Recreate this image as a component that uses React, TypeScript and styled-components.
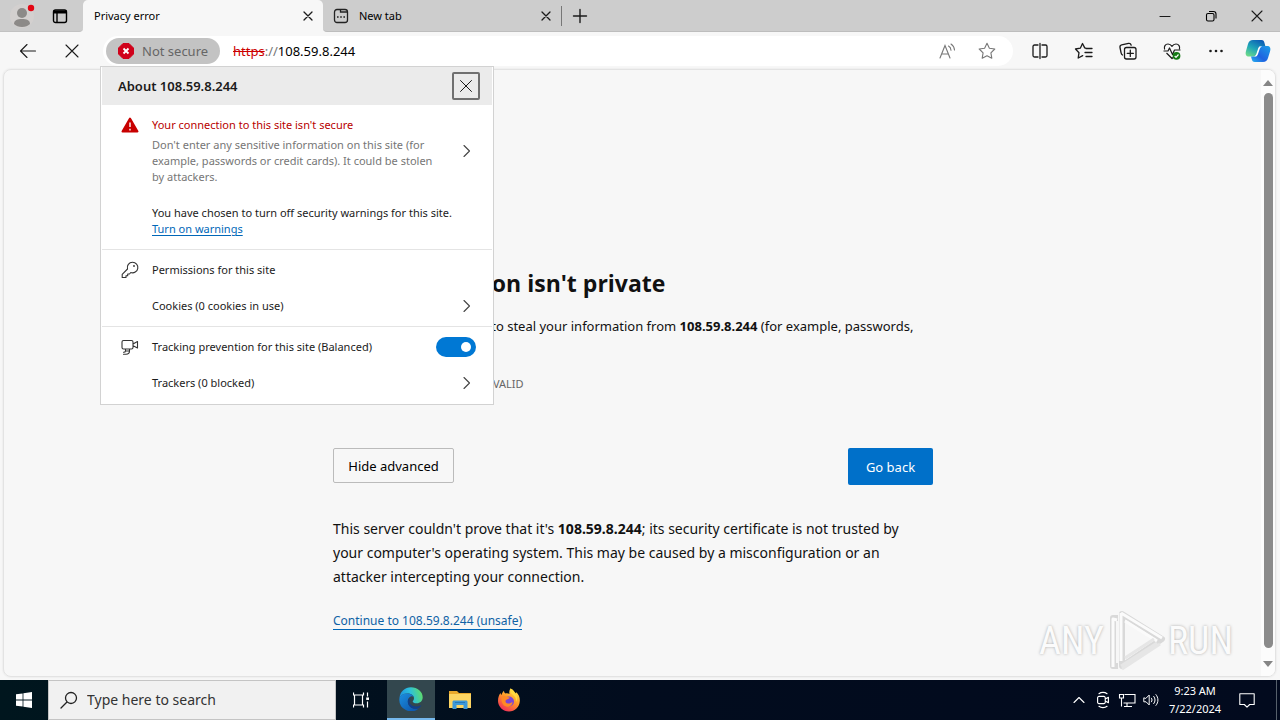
import React from "react";
import styled, { createGlobalStyle, css } from "styled-components";

const GlobalStyle = createGlobalStyle`
  *, *::before, *::after { box-sizing: border-box; }
  body { margin: 0; background: #f7f7f7; }
  body, button, input { font-family: "Noto Sans", "Open Sans", sans-serif; color: #1b1b1b; }
  button { margin: 0; padding: 0; border: 0; background: transparent; cursor: default; }
  h1, h2, p { margin: 0; }
`;

const Screen = styled.div`
  position: relative;
  display: flex;
  flex-direction: column;
  min-height: 100vh;
  overflow: hidden;
`;

/* ---------- tab strip ---------- */

const TabStrip = styled.header`
  display: flex;
  height: 32px;
  background: linear-gradient(#cdcdcd 8px, #f7f7f7 8px);
`;

const StripStart = styled.div`
  display: flex;
  width: 83px;
  background: #cdcdcd;
  border-bottom: 1px solid #c2c2c2;
  border-bottom-right-radius: 4px;
`;

const StripRest = styled.div`
  display: flex;
  flex: 1;
  background: #cdcdcd;
  border-bottom: 1px solid #bdbdbd;
  border-bottom-left-radius: 4px;
`;

const Tab = styled.div<{ $active?: boolean }>`
  display: flex;
  align-items: center;
  width: ${(p) => (p.$active ? 240 : 238)}px;
  padding: 0 3px 0 ${(p) => (p.$active ? 11 : 10)}px;
  border-radius: 5px 5px 0 0;
  background: ${(p) => (p.$active ? "#f7f7f7" : "transparent")};
`;

const TabTitle = styled.button`
  display: flex;
  align-items: center;
  gap: 10px;
  flex: 1;
  font-size: 11px;
  line-height: 16px;
  color: #000;
  text-align: left;
`;

const IconButton = styled.button<{ $w: number }>`
  display: flex;
  align-items: center;
  justify-content: center;
  flex: none;
  width: ${(p) => p.$w}px;
  align-self: stretch;
`;

const Separator = styled.i`
  width: 1px;
  height: 20px;
  align-self: center;
  background: #777;
`;

const WindowControls = styled.div`
  display: flex;
  margin-left: auto;
`;

/* ---------- toolbar ---------- */

const Toolbar = styled.nav`
  display: flex;
  align-items: stretch;
  height: 38px;
  padding: 0 2px 0 6px;
`;

const AddressBar = styled.div`
  display: flex;
  align-items: center;
  flex: 1;
  height: 30px;
  margin: 4px 5px 0 9px;
  padding: 0 6px 0 3px;
  border-radius: 15px;
  background: #fff;
`;

const SecurityBadge = styled.button`
  display: flex;
  align-items: center;
  gap: 8px;
  width: 114px;
  height: 26px;
  padding-left: 12px;
  border-radius: 13px;
  background: #c3c3c3;
  color: #666;
  font-size: 13px;
  line-height: 20px;
`;

const Url = styled.div`
  flex: 1;
  margin-left: 13px;
  font-size: 13px;
  line-height: 20px;
  color: #000;
  outline: none;
`;

const Struck = styled.s`
  color: #c00;
`;

const Muted = styled.span`
  color: #777;
`;

/* ---------- page ---------- */

const Page = styled.main`
  display: flex;
  flex: 1;
  margin: -1px 4px 3px 3px;
  border: 1px solid #e3e3e3;
  border-radius: 8px;
  box-shadow: 0 0 2px #ddd;
  overflow: hidden;
`;

const PageBody = styled.div`
  flex: 1;
  display: flex;
  justify-content: center;
  padding: 197px 0 0 1px;
`;

const Article = styled.article`
  width: 600px;
`;

const Heading = styled.h1`
  font-family: "Open Sans", "Noto Sans", sans-serif;
  font-size: 23px;
  line-height: 32px;
  font-weight: 700;
  color: #111;
`;

const Lead = styled.p`
  margin-top: 15px;
  font-size: 13px;
  line-height: 24px;
  color: #111;
`;

const ErrorCode = styled.p`
  margin-top: 14px;
  font-size: 11px;
  line-height: 16px;
  color: #666;
`;

const Actions = styled.div`
  display: flex;
  justify-content: space-between;
  align-items: flex-start;
  margin-top: 56px;
`;

const ActionButton = styled.button<{ $primary?: boolean }>`
  height: ${(p) => (p.$primary ? 37 : 35)}px;
  width: ${(p) => (p.$primary ? 85 : 121)}px;
  border-radius: 2px;
  font-size: 13px;
  line-height: 20px;
  ${(p) =>
    p.$primary
      ? css`
          background: #0070c9;
          color: #fff;
        `
      : css`
          border: 1px solid #bbb;
          color: #000;
        `}
`;

const Details = styled.p`
  margin-top: 32px;
  padding-right: 24px;
  font-size: 14px;
  line-height: 24px;
  color: #111;
`;

const Proceed = styled.a`
  display: inline-block;
  margin-top: 24px;
  border-bottom: 1px solid #0067b8;
  font-size: 12px;
  line-height: 16px;
  color: #0f62a5;
  text-decoration: none;
`;

const ScrollTrack = styled.div`
  display: flex;
  flex-direction: column;
  align-items: center;
  gap: 7px;
  width: 14px;
  padding: 10px 0 9px;
  background: #fcfcfc;
`;

const ScrollThumb = styled.div`
  flex: 1;
  width: 9px;
  margin-bottom: 6px;
  border-radius: 5px;
  background: #8b8b8b;
`;

/* ---------- site information flyout ---------- */

const Flyout = styled.section`
  position: absolute;
  top: 66px;
  left: 100px;
  width: 394px;
  padding: 0 1px 1px;
  border: 1px solid #d2d2d2;
  background: #fff;
`;

const FlyoutHeader = styled.div`
  display: flex;
  align-items: center;
  justify-content: space-between;
  height: 38px;
  padding: 0 12px 0 16px;
  background: #ebebeb;
`;

const FlyoutTitle = styled.h2`
  font-size: 13px;
  line-height: 20px;
  font-weight: 600;
`;

const FlyoutClose = styled.button`
  display: flex;
  align-items: center;
  justify-content: center;
  width: 28px;
  height: 28px;
  border: 2px solid #707070;
  border-radius: 2px;
`;

const Group = styled.div<{ $tall?: boolean }>`
  padding: ${(p) => (p.$tall ? "12px 0" : "2px 0")};
  border-bottom: 1px solid #e4e4e4;
  &:last-child {
    border-bottom: 0;
  }
`;

const Row = styled.div<{ $top?: boolean }>`
  display: flex;
  align-items: ${(p) => (p.$top ? "flex-start" : "center")};
  min-height: 36px;
  padding: 0 16px 0 18px;
  font-size: 11px;
  line-height: 16px;
`;

const RowIcon = styled.span`
  display: flex;
  flex: none;
  justify-content: center;
  width: 20px;
  margin-right: 12px;
`;

const RowText = styled.div`
  flex: 1;
  padding-right: 16px;
`;

const RowArrow = styled.button`
  display: flex;
  align-items: center;
  justify-content: center;
  align-self: stretch;
  width: 20px;
`;

const Alert = styled.p`
  margin-bottom: 4px;
  color: #b80000;
`;

const Advice = styled.p`
  color: #767676;
`;

const Notice = styled.div`
  padding: 20px 0 0 50px;
  font-size: 11px;
  line-height: 16px;
`;

const WarningsLink = styled.a`
  color: #0067b8;
  text-underline-offset: 2px;
`;

const Toggle = styled.input`
  appearance: none;
  display: flex;
  align-items: center;
  justify-content: flex-end;
  width: 40px;
  height: 20px;
  margin: 0;
  padding: 5px;
  border-radius: 10px;
  background: #0078d4;
  &::before {
    content: "";
    width: 10px;
    height: 10px;
    border-radius: 50%;
    background: #fff;
  }
`;

/* ---------- watermark ---------- */

const Watermark = styled.div`
  position: absolute;
  right: 47px;
  bottom: 47px;
  display: flex;
  align-items: center;
  gap: 2px;
  font-family: "Roboto Condensed", "Liberation Sans Narrow", "Liberation Sans", sans-serif;
  font-size: 38px;
  line-height: 64px;
  color: #fbfbfb;
  text-shadow: 0 0 3px #aaa;
`;

/* ---------- taskbar ---------- */

const Taskbar = styled.footer`
  display: flex;
  height: 40px;
  background: linear-gradient(90deg, #00161e, #020c1e 50%, #020a1e);
`;

const TaskButton = styled.button<{ $active?: boolean }>`
  display: flex;
  align-items: center;
  justify-content: center;
  width: 48px;
  margin-right: 1px;
  background: ${(p) => (p.$active ? "#33474e" : "transparent")};
  border-bottom: ${(p) => (p.$active ? "2px solid #76b9ed" : "0")};
`;

const SearchBox = styled.label`
  display: flex;
  align-items: center;
  gap: 8px;
  width: 288px;
  margin-right: 2px;
  padding-left: 10px;
  border: 1px solid #c4c4c4;
  background: #f1f1f1;
`;

const SearchInput = styled.input`
  flex: 1;
  min-width: 0;
  border: 0;
  padding: 0;
  background: transparent;
  outline: 0;
  font-size: 14px;
  line-height: 20px;
  &::placeholder {
    color: #333;
    opacity: 1;
  }
`;

const Tray = styled.div`
  display: flex;
  margin-left: auto;
  padding-right: 3px;
`;

const Clock = styled.time`
  display: flex;
  flex-direction: column;
  justify-content: center;
  width: 64px;
  font-size: 11px;
  line-height: 18px;
  text-align: center;
  color: #fff;
`;

const DesktopEdge = styled.i`
  width: 1px;
  background: #56606b;
`;

/* ---------- icons ---------- */

type LineProps = { d: string; size?: number; box?: number; color?: string; width?: number; fill?: string };

const Line = ({ d, size = 20, box = 20, color = "#1b1b1b", width = 1.1, fill = "none" }: LineProps) => (
  <svg
    width={size}
    height={size}
    viewBox={`0 0 ${box} ${box}`}
    fill={fill}
    stroke={color}
    strokeWidth={width}
    strokeLinecap="round"
    strokeLinejoin="round"
    aria-hidden="true"
  >
    <path d={d} />
  </svg>
);

const CROSS = "M2 2 10 10M10 2 2 10";
const STAR = "M10 2.3 12.4 7.2 17.8 8 13.9 11.8 14.8 17.2 10 14.7 5.2 17.2 6.1 11.8 2.2 8 7.6 7.2Z";
const CHEVRON = "M8 4.5 13.500 10 8 15.5";

const ProfileIcon = () => (
  <svg width="28" height="28" viewBox="0 0 28 28" aria-hidden="true">
    <circle cx="14" cy="14" r="12" fill="#d3d0cf" />
    <circle cx="14" cy="11" r="5" fill="#8c8a88" />
    <path d="M6 22c0-4 3.500-5 8-5s8 1 8 5c-2 2-4.500 3-8 3s-6-1-8-3Z" fill="#8c8a88" />
    <circle cx="23" cy="6" r="3.200" fill="#e30613" />
  </svg>
);

const WorkspaceIcon = () => (
  <svg width="16" height="16" viewBox="0 0 16 16" fill="none" stroke="#000" strokeWidth="1.4" aria-hidden="true">
    <rect x="1.500" y="2" width="13" height="12.500" rx="2" />
    <path d="M1.500 4h13" strokeWidth="3" />
    <path d="M5 4v10.500" />
  </svg>
);

const NewTabIcon = () => (
  <svg width="16" height="16" viewBox="0 0 16 16" fill="none" stroke="#222" strokeWidth="1.3" aria-hidden="true">
    <rect x="1.500" y="1.500" width="13" height="13" rx="2.500" />
    <path d="M7.500 1.500v2.500h7" />
    <path d="M4 9h1.600M7.200 9h1.600M10.400 9H12" strokeWidth="1.600" />
  </svg>
);

const RestoreIcon = () => (
  <svg width="12" height="12" viewBox="0 0 12 12" fill="none" stroke="#000" strokeWidth="1.1" aria-hidden="true">
    <rect x="1.500" y="3.500" width="7.500" height="7.500" rx="1.500" />
    <path d="M4 1.500h4.500a2.500 2.500 0 0 1 2.500 2.500v4.500" />
  </svg>
);

const DangerIcon = () => (
  <svg width="16" height="16" viewBox="0 0 16 16" aria-hidden="true">
    <path d="M5 .5h6L15.500 5v6L11 15.500H5L.5 11V5Z" fill="#d0021b" stroke="#d0021b" strokeLinejoin="round" />
    <path d="m5.500 5.500 5 5m0-5-5 5" stroke="#fff" strokeWidth="1.800" />
  </svg>
);

const ReadAloudIcon = () => (
  <svg width="20" height="20" viewBox="0 0 20 20" fill="none" stroke="#777" strokeWidth="1.1" strokeLinecap="round" aria-hidden="true">
    <path d="M3 17 8 4.500 13 17M4.700 13h6.600" />
    <path d="M11.500 5c1.500.8 2.400 2.400 2.500 4.200M14 3c2 1.300 3.300 3.500 3.500 6" />
  </svg>
);

const SplitIcon = () => (
  <Line d="M8 4H4.500A1.500 1.500 0 0 0 3 5.500v9A1.500 1.500 0 0 0 4.500 16H8M12 4h3.500A1.500 1.500 0 0 1 17 5.500v9a1.500 1.500 0 0 1-1.500 1.500H12M10 2.500v15" width={1.300} />
);

const FavoritesIcon = () => (
  <Line d="M12.500 7.300 10.700 6.900 8.500 2.500 6.300 7.200 1.500 8 5 11.700 4.200 17 8.700 14.600M12 7.500h6M11 11.500h7M12 15.500h6" width={1.300} />
);

const CollectionsIcon = () => (
  <Line d="M8.500 6.500h7.500a2 2 0 0 1 2 2V16a2 2 0 0 1-2 2H8.500a2 2 0 0 1-2-2V8.500a2 2 0 0 1 2-2ZM12.300 9.200v6.200M9.200 12.300h6.200M4.500 14C3.300 13.300 3.200 12.500 3 11.500L2 6.500C1.800 5 2.300 4.200 3.700 3.900L10.500 2.400C12 2.100 12.800 2.800 13.200 4.200" width={1.300} />
);

const EssentialsIcon = () => (
  <svg width="20" height="20" viewBox="0 0 20 20" fill="none" stroke="#1b1b1b" strokeWidth="1.2" strokeLinejoin="round" aria-hidden="true">
    <path d="M2.600 8.500C1.700 5.500 3.300 3 6 3c1.800 0 3 .8 4 2.300C11 3.800 12.200 3 14 3c2.700 0 4.300 2.500 3.400 5.500M4.500 12l5.500 5.500 1-1" />
    <path d="M1.500 10H6l1.500-3 3 6.500 2-4.500h6" />
    <circle cx="14.500" cy="14.800" r="3.900" fill="#157a15" stroke="none" />
    <path d="m12.700 15 1.300 1.300 2.500-2.800" stroke="#fff" />
  </svg>
);

const MoreIcon = () => (
  <svg width="20" height="20" viewBox="0 0 20 20" fill="#1b1b1b" aria-hidden="true">
    <circle cx="4.500" cy="10" r="1.300" />
    <circle cx="10" cy="10" r="1.300" />
    <circle cx="15.500" cy="10" r="1.300" />
  </svg>
);

const CopilotIcon = () => (
  <svg width="26" height="24" viewBox="0 0 26 24" aria-hidden="true">
    <defs>
      <linearGradient id="cop-a" x1=".2" y1="1" x2=".8" y2="0">
        <stop offset="0" stopColor="#6bd98a" />
        <stop offset=".45" stopColor="#1fa6b8" />
        <stop offset="1" stopColor="#0a58b5" />
      </linearGradient>
      <linearGradient id="cop-b" x1="1" y1="0" x2="0" y2="1">
        <stop offset="0" stopColor="#1b9fe8" />
        <stop offset=".6" stopColor="#1f62e0" />
        <stop offset="1" stopColor="#27b3f0" />
      </linearGradient>
    </defs>
    <path d="M8 1h8.500c2 0 2.500 1 3 3l.8 3H17c-2 0-3 1-3.500 3l-1.600 5c-.6 2-1.500 2.500-3.400 2.500H4C1 17.500 0 15.500 1 12l2-7C3.800 2.200 5.300 1 8 1Z" fill="url(#cop-a)" />
    <path d="M18 23H9.800c-2 0-2.600-1-3.100-3L6 17.500h3c2 0 3-1 3.500-3l1.600-5c.6-2 1.500-2.500 3.400-2.500H22c3 0 4 2 3 5.500l-2 6.500c-.8 2.800-2.300 4-5 4Z" fill="url(#cop-b)" />
    <path d="M14.500 7.500h2.800c-1.600.4-2.300 1.500-2.800 3L13 15c-.6 1.700-1.400 2.500-3 2.600H8.500c1.700-.3 2.400-1.200 3-3l1.400-4.300c.4-1.300.8-2.100 1.600-2.800Z" fill="#fff" />
  </svg>
);

const WarningIcon = () => (
  <svg width="18" height="16" viewBox="0 0 18 16" aria-hidden="true">
    <path d="M9 1.500 16.500 14.500h-15Z" fill="#c80000" stroke="#c80000" strokeWidth="2" strokeLinejoin="round" />
    <path d="M9 5.500v4.500M9 11.800v1.600" stroke="#fff" strokeWidth="1.400" />
  </svg>
);

const KeyIcon = () => (
  <svg width="20" height="20" viewBox="0 0 20 20" fill="none" stroke="#333" strokeWidth="1.100" strokeLinejoin="round" aria-hidden="true">
    <path d="M12.500 2.200a5.300 5.300 0 1 1-1.700 10.300L9.500 14H7.700v1.800H6v1.700H2.200v-3.200L7.500 9A5.300 5.300 0 0 1 12.500 2.200Z" />
    <circle cx="14" cy="6" r=".9" fill="#333" stroke="none" />
  </svg>
);

const TrackingIcon = () => (
  <Line
    d="M3.500 3.500h8A1.500 1.500 0 0 1 13 5v5.500a1.500 1.500 0 0 1-1.500 1.500h-8A1.500 1.500 0 0 1 2 10.500V5A1.500 1.500 0 0 1 3.500 3.500ZM13 7l4.500-2.500v6.500L13 8.800M5.500 12v2h4v-2M9.500 14c0 2-1.500 3.200-3.500 3.200H3.500M5.500 14c0 1-.8 1.300-2 1.300"
    color="#333"
  />
);

const PlayMark = () => (
  <svg width="60" height="64" viewBox="0 0 60 64" fill="none" strokeLinejoin="round" aria-hidden="true">
    <g stroke="#000" strokeOpacity=".12" strokeWidth="6">
      <path d="M16 5 56 30 16 57Z" />
      <path d="M12 9H7v48h5" />
    </g>
    <g stroke="#fbfbfb" strokeWidth="3">
      <path d="M15 4v48M15 4l41 25M19 12l32 20" />
      <path d="M11 11 7 10v48" />
    </g>
    <path d="M51 34 15 57M48 30 19 49M16 60l38-25" stroke="#e6e6e6" strokeWidth="3" />
  </svg>
);

const WindowsIcon = () => (
  <svg width="16" height="16" viewBox="0 0 16 16" fill="#fff" aria-hidden="true">
    <path d="M0 2.300 6.600 1.400v6.200H0ZM7.400 1.300 16 0v7.600H7.400ZM0 8.400h6.600v6.200L0 13.700ZM7.400 8.400H16V16l-8.600-1.200Z" />
  </svg>
);

const TaskViewIcon = () => (
  <svg width="18" height="18" viewBox="0 0 18 18" fill="none" stroke="#fff" strokeWidth="1.200" aria-hidden="true">
    <path d="M.5 1.500v2.500h10V1.500M.5 16.500V14h10v2.500M1.500 4v10M9.500 4v10M14.500 1.500v4M14.500 10.500v6" />
    <path d="M13.200 7.700h2.800" strokeWidth="2.500" />
  </svg>
);

const EdgeIcon = () => (
  <svg width="24" height="24" viewBox="0 0 24 24" aria-hidden="true">
    <defs>
      <linearGradient id="edge-top" x1="0" y1=".6" x2="1" y2=".4">
        <stop offset="0" stopColor="#1c8fe0" />
        <stop offset=".5" stopColor="#2cc0dc" />
        <stop offset="1" stopColor="#5fdc68" />
      </linearGradient>
      <linearGradient id="edge-low" x1="0" y1="0" x2="1" y2="1">
        <stop offset="0" stopColor="#1b8fe0" />
        <stop offset="1" stopColor="#0c4fa6" />
      </linearGradient>
    </defs>
    <path d="M.5 11C1 4.500 6 .3 12 .3c6.500 0 11.700 4.500 11.700 10 0 3.800-2.700 6-6 6-2.500 0-4-1-4-1.800 0-.7 1.300-1.200 1.300-3.300C15 8.500 12 6.500 8.500 6.500 4.500 6.500 1.500 8.500.5 11Z" fill="url(#edge-top)" />
    <path d="M.4 11.500C1.300 8.300 4.500 6.500 8.300 6.500c3 0 5.700 1.300 6.500 3.400-1-.7-2-.8-3-.4-2 .8-3.300 2.900-3 5.500.4 4 4 6.800 8 6.800 1.300 0 2.200-.2 3.200-.6A11.700 11.700 0 0 1 .4 11.500Z" fill="url(#edge-low)" />
    <path d="M9 13.500c-.7 4.700 3 8.500 8 8.300 2.200-.2 4.300-1.600 5.500-3.600-5 2.500-10 1.300-11.500-1.700-.8-1.600-.4-3.700.8-5-1.500.2-2.500 1-2.800 2Z" fill="#103f8c" />
  </svg>
);

const ExplorerIcon = () => (
  <svg width="22" height="20" viewBox="0 0 22 20" aria-hidden="true">
    <path d="M0 1h8l2 2h12v4H0Z" fill="#e9a82b" />
    <path d="M0 4h22v14H0Z" fill="#fcd462" />
    <path d="M3.500 19v-7c0-1 .7-1.500 1.500-1.500h12c.8 0 1.500.5 1.500 1.500v7h-4v-4h-7v4Z" fill="#3d98d8" />
    <path d="M6 12.500h10" stroke="#2679b8" />
  </svg>
);

const FirefoxIcon = () => (
  <svg width="24" height="24" viewBox="0 0 24 24" aria-hidden="true">
    <defs>
      <linearGradient id="fox" x1=".8" y1="0" x2=".2" y2="1">
        <stop offset="0" stopColor="#ffe64a" />
        <stop offset=".45" stopColor="#ff9a28" />
        <stop offset="1" stopColor="#f0245c" />
      </linearGradient>
    </defs>
    <path d="M13.500.5c3 1.200 4 3.700 4.500 5 .8 0 1-.8.900-1.500C22 6.500 23 9.500 22.800 13c-.3 6-5 10.500-10.800 10.500S1 18.800 1 13c0-3.500 1-6 2.500-8 .2 1 .5 1.700 1 2C5 5 6 3.500 7 2.700 7 4 7.500 5 8.500 5.500c1.500-.5 3 0 4 .5C12 4 12.300 2 13.500.5Z" fill="url(#fox)" />
    <circle cx="12" cy="13.500" r="5" fill="#7a45d6" />
    <path d="M4.500 9.500c1.500-1.800 3.500-1.800 5-1 1.300.8 2.500.8 3.500 1-1 1.700-3 1.500-4 2.500s-.3 2.700 1 3.200c2 .8 4-.2 5.500-1.500 0 3-2 5-5 5-3.800 0-6.500-3.700-6-9.200Z" fill="#ff8a24" />
    <path d="M13.500.5c-1 3 .5 5 2.500 6.500s3.500 3.500 3 7c2-3 1.500-6-.5-8.500C17.500 3.500 16 1.500 13.500.5Z" fill="#ffd93f" />
  </svg>
);

const MeetIcon = () => (
  <Line
    d="M5.500 6h5.500A1.500 1.500 0 0 1 12.500 7.500v5a1.500 1.500 0 0 1-1.500 1.500h-5.500A1.500 1.500 0 0 1 4 12.500v-5A1.500 1.500 0 0 1 5.500 6ZM12.500 9l3.500-2v6L12.500 11M5.500 3c2.500-2 6.500-2 9 0M5.500 17c2.500 2 6.500 2 9 0"
    color="#fff"
    size={18}
    width={1.3}
  />
);

const NetworkIcon = () => (
  <svg width="18" height="16" viewBox="0 0 18 16" fill="none" stroke="#fff" strokeWidth="1.100" aria-hidden="true">
    <path d="M6.500 2.500H17v8.500H5.500M9 11v3.500M6 14.500h8M1.500 2.500h4v3.500h-4ZM3.500 6v8.500" />
  </svg>
);

const VolumeIcon = () => (
  <Line d="M2 8v4h2.500L8 15.500v-11L4.500 8ZM10.500 8c.9 1.200.9 2.800 0 4M13 6c2 2.300 2 5.700 0 8M15.500 4c3 3.500 3 8.500 0 12" color="#fff" size={18} />
);

const App = () => (
  <Screen>
    <GlobalStyle />
    <TabStrip>
      <StripStart>
        <IconButton $w={44} aria-label="Profile"><ProfileIcon /></IconButton>
        <IconButton $w={32} aria-label="Workspaces"><WorkspaceIcon /></IconButton>
      </StripStart>
      <Tab $active>
        <TabTitle>Privacy error</TabTitle>
        <IconButton $w={24} aria-label="Close Privacy error"><Line d={CROSS} size={12} box={12} width={1.3} /></IconButton>
      </Tab>
      <StripRest>
        <Tab>
          <TabTitle><NewTabIcon />New tab</TabTitle>
          <IconButton $w={24} aria-label="Close New tab"><Line d={CROSS} size={12} box={12} width={1.3} /></IconButton>
        </Tab>
        <Separator />
        <IconButton $w={36} aria-label="Open a new tab"><Line d="M10 3.500v13M3.500 10h13" width={1.4} /></IconButton>
        <WindowControls>
          <IconButton $w={46} aria-label="Minimize"><Line d="M1 6.500h10" size={12} box={12} /></IconButton>
          <IconButton $w={46} aria-label="Restore"><RestoreIcon /></IconButton>
          <IconButton $w={46} aria-label="Close window"><Line d="M1 1 11 11M11 1 1 11" size={12} box={12} /></IconButton>
        </WindowControls>
      </StripRest>
    </TabStrip>

    <Toolbar aria-label="Browser toolbar">
      <IconButton $w={44} aria-label="Back"><Line d="M17.500 10H2.500M9 3.500 2.500 10 9 16.500" /></IconButton>
      <IconButton $w={44} aria-label="Stop"><Line d="M4 4 16 16M16 4 4 16" /></IconButton>
      <AddressBar>
        <SecurityBadge><DangerIcon />Not secure</SecurityBadge>
        <Url role="textbox" aria-label="Address" contentEditable suppressContentEditableWarning spellCheck={false}>
          <Struck>https</Struck><Muted>://</Muted>108.59.8.244
        </Url>
        <IconButton $w={40} aria-label="Read aloud"><ReadAloudIcon /></IconButton>
        <IconButton $w={40} aria-label="Add to favorites"><Line d={STAR} color="#777" /></IconButton>
      </AddressBar>
      <IconButton $w={44} aria-label="Split screen"><SplitIcon /></IconButton>
      <IconButton $w={44} aria-label="Favorites"><FavoritesIcon /></IconButton>
      <IconButton $w={44} aria-label="Collections"><CollectionsIcon /></IconButton>
      <IconButton $w={44} aria-label="Browser essentials"><EssentialsIcon /></IconButton>
      <IconButton $w={44} aria-label="Settings and more"><MoreIcon /></IconButton>
      <IconButton $w={40} aria-label="Copilot"><CopilotIcon /></IconButton>
    </Toolbar>

    <Page>
      <PageBody>
        <Article>
          <Heading>Your connection isn't private</Heading>
          <Lead>
            Attackers might be trying to steal your information from <b>108.59.8.244</b> (for example, passwords,
            messages, or credit cards)
          </Lead>
          <ErrorCode>NET::ERR_CERT_AUTHORITY_INVALID</ErrorCode>
          <Actions>
            <ActionButton>Hide advanced</ActionButton>
            <ActionButton $primary>Go back</ActionButton>
          </Actions>
          <Details>
            This server couldn't prove that it's <b>108.59.8.244</b>; its security certificate is not trusted by your
            computer's operating system. This may be caused by a misconfiguration or an attacker intercepting your
            connection.
          </Details>
          <Proceed href="#proceed">Continue to 108.59.8.244 (unsafe)</Proceed>
        </Article>
      </PageBody>
      <ScrollTrack aria-hidden="true">
        <svg width="10" height="6" viewBox="0 0 10 6"><path d="M5 0 10 6H0Z" fill="#858585" /></svg>
        <ScrollThumb />
        <svg width="10" height="6" viewBox="0 0 10 6"><path d="M0 0h10L5 6Z" fill="#858585" /></svg>
      </ScrollTrack>
    </Page>

    <Watermark>
      <span>ANY</span>
      <PlayMark />
      <span>RUN</span>
    </Watermark>

    <Flyout aria-label="Site information">
      <FlyoutHeader>
        <FlyoutTitle>About 108.59.8.244</FlyoutTitle>
        <FlyoutClose aria-label="Close"><Line d="M0.500 0.500 11.500 11.500M11.500 0.500 0.500 11.500" size={12} box={12} width={1} /></FlyoutClose>
      </FlyoutHeader>
      <Group $tall>
        <Row $top>
          <RowIcon><WarningIcon /></RowIcon>
          <RowText>
            <Alert>Your connection to this site isn't secure</Alert>
            <Advice>
              Don't enter any sensitive information on this site (for example, passwords or credit cards). It could be
              stolen by attackers.
            </Advice>
          </RowText>
          <RowArrow aria-label="Connection details"><Line d={CHEVRON} color="#444" /></RowArrow>
        </Row>
        <Notice>
          <p>You have chosen to turn off security warnings for this site.</p>
          <WarningsLink href="#warnings">Turn on warnings</WarningsLink>
        </Notice>
      </Group>
      <Group>
        <Row>
          <RowIcon><KeyIcon /></RowIcon>
          <RowText>Permissions for this site</RowText>
        </Row>
        <Row>
          <RowIcon />
          <RowText>Cookies (0 cookies in use)</RowText>
          <RowArrow aria-label="Cookies"><Line d={CHEVRON} color="#444" /></RowArrow>
        </Row>
      </Group>
      <Group>
        <Row>
          <RowIcon><TrackingIcon /></RowIcon>
          <RowText><label htmlFor="tracking">Tracking prevention for this site (Balanced)</label></RowText>
          <Toggle id="tracking" type="checkbox" role="switch" defaultChecked />
        </Row>
        <Row>
          <RowIcon />
          <RowText>Trackers (0 blocked)</RowText>
          <RowArrow aria-label="Trackers"><Line d={CHEVRON} color="#444" /></RowArrow>
        </Row>
      </Group>
    </Flyout>

    <Taskbar>
      <IconButton $w={48} aria-label="Start"><WindowsIcon /></IconButton>
      <SearchBox>
        <Line d="M12 2.500a5.500 5.500 0 1 1 0 11a5.500 5.500 0 1 1 0-11ZM8 12 2 18" color="#222" width={1.3} />
        <SearchInput type="text" placeholder="Type here to search" aria-label="Search" />
      </SearchBox>
      <TaskButton aria-label="Task view"><TaskViewIcon /></TaskButton>
      <TaskButton $active aria-label="Microsoft Edge"><EdgeIcon /></TaskButton>
      <TaskButton aria-label="File Explorer"><ExplorerIcon /></TaskButton>
      <TaskButton aria-label="Firefox"><FirefoxIcon /></TaskButton>
      <Tray>
        <IconButton $w={24} aria-label="Show hidden icons"><Line d="M1 8.500 6 3.500l5 5" size={12} box={12} color="#fff" /></IconButton>
        <IconButton $w={24} aria-label="Meet now"><MeetIcon /></IconButton>
        <IconButton $w={24} aria-label="Network"><NetworkIcon /></IconButton>
        <IconButton $w={24} aria-label="Volume"><VolumeIcon /></IconButton>
        <Clock><span>9:23 AM</span><span>7/22/2024</span></Clock>
        <IconButton $w={40} aria-label="Notifications">
          <Line d="M2 3h16v12h-5l-3 3-3-3H2Z" color="#fff" size={18} width={1.2} />
        </IconButton>
        <IconButton $w={9} aria-label="Show desktop" />
        <DesktopEdge />
      </Tray>
    </Taskbar>
  </Screen>
);

export default App;
